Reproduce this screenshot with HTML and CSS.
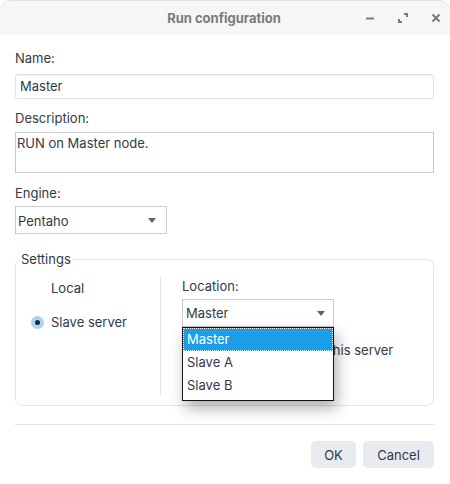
FILE: index.html
```html
<!DOCTYPE html>
<html>
<head>
<meta charset="utf-8">
<link rel="stylesheet" href="styles.css">
</head>
<body>
<div class="window">
  <div class="titlebar">
    <div class="title">Run configuration</div>
    <div class="controls">
      <svg class="ctl" width="12" height="12" viewBox="0 0 12 12"><path d="M2 6.5H10" stroke="#7a7a7a" stroke-width="2" fill="none"/></svg>
      <svg class="ctl" width="12" height="12" viewBox="0 0 12 12"><path d="M7 2H10V5M5 10H2V7" stroke="#7a7a7a" stroke-width="2" fill="none"/></svg>
      <svg class="ctl" width="12" height="12" viewBox="0 0 12 12"><path d="M2.5 2.5L9.5 9.5M9.5 2.5L2.5 9.5" stroke="#7a7a7a" stroke-width="2" fill="none"/></svg>
    </div>
  </div>
  <div class="content">
    <div class="label l-name">Name:</div>
    <div class="input">Master</div>
    <div class="label l-desc">Description:</div>
    <div class="textarea">RUN on Master node.</div>
    <div class="label l-engine">Engine:</div>
    <div class="select engine"><span>Pentaho</span><i class="arrow"></i></div>
    <fieldset class="settings">
      <legend>Settings</legend>
      <div class="settings-body">
        <div class="left">
          <div class="radio-row first"><span class="radio"></span><span>Local</span></div>
          <div class="radio-row second"><span class="radio checked"></span><span>Slave server</span></div>
        </div>
        <div class="right">
          <div class="label">Location:</div>
          <div class="select-wrap">
            <div class="select location"><span>Master</span><i class="arrow"></i></div>
            <div class="dropdown">
              <div class="item active">Master</div>
              <div class="item">Slave A</div>
              <div class="item">Slave B</div>
            </div>
          </div>
          <div class="check-row"><span class="check"></span><span>Send resources to this server</span></div>
        </div>
      </div>
    </fieldset>
    <div class="sep"></div>
    <div class="buttons">
      <button class="btn ok">OK</button>
      <button class="btn cancel">Cancel</button>
    </div>
  </div>
</div>
</body>
</html>
```
FILE: styles.css
```css
html, body {
  margin: 0;
  padding: 0;
  background: #ffffff;
}
body {
  font-family: Inter, "Noto Sans", sans-serif;
  font-size: 13px;
  line-height: 16px;
  color: #323a42;
}
.window {
  width: 450px;
  height: 484px;
}
.titlebar {
  height: 35px;
  background: #f6f6f6;
  border-radius: 11px 11px 0 0;
  box-shadow: inset 0 1px 0 #e2e2e2;
  position: relative;
  display: flex;
  align-items: center;
  justify-content: center;
}
.title {
  font-weight: 700;
  color: #7b7b7b;
  font-size: 13px;
  margin-left: -2px;
}
.controls {
  position: absolute;
  right: 8px;
  top: 12px;
  display: flex;
  gap: 21px;
}
.ctl { display: block; }
.content {
  padding: 15px 16px 0 15px;
}
.label { height: 16px; }
.l-name { margin-bottom: 8px; }
.input {
  height: 23px;
  border: 1px solid #dde1e6;
  border-radius: 3px;
  box-shadow: inset 0 1px 1px rgba(0,0,0,0.05);
  padding-left: 4px;
  line-height: 23px;
}
.l-desc { margin-top: 11px; margin-bottom: 6px; }
.textarea {
  height: 39px;
  border: 1px solid #c6cacf;
  padding-left: 1px;
  line-height: 20px;
}
.l-engine { margin-top: 12px; margin-bottom: 5px; }
.select {
  height: 26px;
  border: 1px solid #c8ccd1;
  display: flex;
  align-items: center;
  justify-content: space-between;
  box-sizing: content-box;
  background: #fff;
}
.engine { width: 148px; padding: 0 0 0 2px; }
.engine span { margin-top: 1px; }
.arrow {
  width: 0;
  height: 0;
  border-left: 4.5px solid transparent;
  border-right: 4.5px solid transparent;
  border-top: 5px solid #5d636b;
  margin-right: 10px;
}
.settings {
  margin: 17px 0 0 0;
  padding: 0;
  border: 1px solid #e4e6e8;
  border-radius: 7px;
  min-width: 0;
}
.settings legend {
  padding: 0 1px;
  margin-left: 4px;
  line-height: 16px;
}
.settings-body {
  display: flex;
  padding: 10px 0 10px 0;
}
.left {
  border-right: 1px solid #e2e4e6;
  padding-left: 15px;
  box-sizing: border-box;
  width: 145px;
}
.radio-row {
  display: flex;
  align-items: center;
  gap: 7px;
  height: 16px;
}
.radio-row.first { margin-top: 3px; }
.radio-row.second { margin-top: 18px; }
.radio {
  width: 13px;
  height: 13px;
  border-radius: 50%;
  box-sizing: border-box;
}
.radio.checked {
  background: #a9d5f3;
  position: relative;
}
.radio.checked::after {
  content: "";
  position: absolute;
  left: 4px;
  top: 4px;
  width: 5px;
  height: 5px;
  border-radius: 50%;
  background: #1e2a36;
}
.right {
  padding-left: 21px;
  padding-top: 1px;
  height: 118px;
  box-sizing: border-box;
}
.right .label { margin-bottom: 5px; }
.select-wrap { position: relative; width: 152px; }
.location { width: 148px; padding-left: 2px; }
.location span { margin-left: 1px; }
.location .arrow { margin-right: 8px; }
.dropdown {
  position: absolute;
  left: 0;
  top: 28px;
  width: 150px;
  height: 72px;
  background: #fff;
  border: 1px solid #111;
  box-shadow: 3px 7px 14px rgba(0,0,0,0.32);
  z-index: 5;
}
.item {
  height: 23px;
  line-height: 23px;
  padding-left: 4px;
  box-sizing: border-box;
}
.item.active {
  background: #1a9ee8;
  color: #fff;
  outline: 1px dotted #e8f4fc;
  outline-offset: -1px;
}
.check-row {
  display: flex;
  align-items: center;
  gap: 8px;
  margin-top: 15px;
  margin-left: 11px;
  white-space: nowrap;
}
.check {
  width: 12px;
  height: 12px;
  border: 1px solid #c8ccd1;
  border-radius: 2px;
  box-sizing: border-box;
}
.sep {
  height: 1px;
  background: #e3e4e6;
  margin-top: 18px;
}
.buttons {
  display: flex;
  justify-content: flex-end;
  gap: 7px;
  margin-top: 16px;
}
.btn {
  font-family: inherit;
  font-size: 13px;
  color: #323a42;
  background: #e8ecf0;
  border: none;
  border-radius: 5px;
  height: 27px;
  padding: 0;
}
.ok { width: 45px; }
.cancel { width: 71px; }
```
